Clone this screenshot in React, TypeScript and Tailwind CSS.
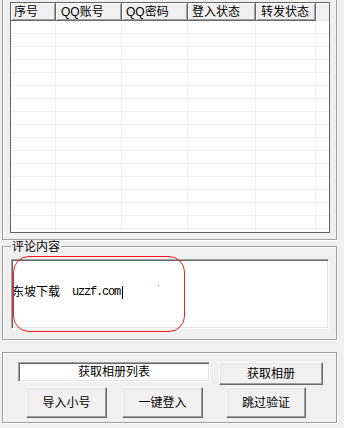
import React from "react";

const COLS = [
  { title: "序号", w: "w-[45px]", pl: "pl-[3px]" },
  { title: "QQ账号", w: "w-[66px]", pl: "pl-[5px]" },
  { title: "QQ密码", w: "w-[66px]", pl: "pl-[4px]" },
  { title: "登入状态", w: "w-[68px]", pl: "pl-[4px]" },
  { title: "转发状态", w: "w-[60px]", pl: "pl-[5px]" },
];

const ROWS = Array.from({ length: 17 }, (_, i) => i);

const etched = "border border-[#a0a0a0] shadow-[inset_1px_1px_0_#fff,1px_1px_0_#fff]";
const sunken = "border border-t-[#a0a0a0] border-l-[#a0a0a0] border-b-white border-r-white shadow-[inset_1px_1px_0_#696969,inset_-1px_-1px_0_#e3e3e3] bg-white";
const raised = "border border-t-white border-l-white border-b-[#696969] border-r-[#696969] shadow-[inset_-1px_-1px_0_#a0a0a0,inset_1px_1px_0_#e3e3e3] bg-[#f0f0f0] flex items-center justify-center";

function Button({ label, className }: { label: string; className: string }) {
  return <div className={`${raised} ${className}`}>{label}</div>;
}

export default function App() {
  return (
    <div className="relative w-[344px] h-[428px] overflow-hidden bg-[#f0f0f0] text-black text-[12px] leading-[14px] font-['Liberation_Sans','Noto_Sans_CJK_SC',sans-serif]">
      {/* account list group */}
      <div className={`${etched} ml-[2px] mt-[-8px] w-[335px] h-[248px] pt-[9px] pl-[7px] pr-[6px] pb-[6px]`}>
        <div className="w-[320px] h-[231px] border border-[#646464] bg-white overflow-hidden flex flex-col">
          <div className="flex h-[18px] shrink-0">
            {COLS.map((c) => (
              <div
                key={c.title}
                className={`${c.w} ${c.pl} h-full flex items-center border-r border-b border-[#696969] shadow-[inset_1px_1px_0_#fff,inset_-1px_-1px_0_#a0a0a0] bg-[#f0f0f0]`}
              >
                {c.title}
              </div>
            ))}
            <div className="flex-1 h-full bg-[#f0f0f0] border-b border-[#e3e3e3] shadow-[inset_1px_1px_0_#fff]" />
          </div>
          {ROWS.map((r) => (
            <div key={r} className="flex h-[13px] shrink-0">
              {COLS.map((c) => (
                <div key={c.title} className={`${c.w} h-full border-r border-b border-[#f0f0f0]`} />
              ))}
              <div className="flex-1 h-full border-b border-[#f0f0f0]" />
            </div>
          ))}
        </div>
      </div>

      {/* comment group */}
      <div className={`${etched} relative ml-[2px] mt-[6px] w-[335px] h-[94px] pt-[12px] pl-[8px] pr-[7px] pb-[10px]`}>
        <span className="absolute left-[8px] top-[-7px] px-[1px] bg-[#f0f0f0]">评论内容</span>
        <div className={`${sunken} w-[318px] h-[70px] pt-[25px] pl-0`}>
          <div className="flex items-center h-[14px]">
            <span>东坡下载</span>
            <span className="ml-[12px] text-[12px] tracking-[-1.2px] font-['Liberation_Mono',monospace]">uzzf.com</span>
            <span className="inline-block w-px h-[13px] bg-black ml-[2px]" />
          </div>
        </div>
      </div>

      {/* actions group */}
      <div className={`${etched} ml-[2px] mt-[12px] w-[335px] h-[71px] pt-[9px] pl-[15px] pb-[4px]`}>
        <div className="flex items-start gap-[9px]">
          <div className={`${sunken} w-[192px] h-[20px] flex items-center justify-center`}>获取相册列表</div>
          <Button label="获取相册" className="w-[104px] h-[23px]" />
        </div>
        <div className="flex items-start mt-[2px] pl-[8px]">
          <Button label="导入小号" className="w-[81px] h-[31px]" />
          <Button label="一键登入" className="w-[81px] h-[31px] ml-[15px]" />
          <Button label="跳过验证" className="w-[80px] h-[31px] ml-[23px]" />
        </div>
      </div>

      {/* red annotation marks */}
      <div className="absolute left-[13px] top-[256px] w-[172px] h-[76px] rounded-[16px] border border-[#ff1a1a]" />
      <div className="absolute left-[158px] top-[285px] w-px h-px bg-[#ff6060]" />
    </div>
  );
}
